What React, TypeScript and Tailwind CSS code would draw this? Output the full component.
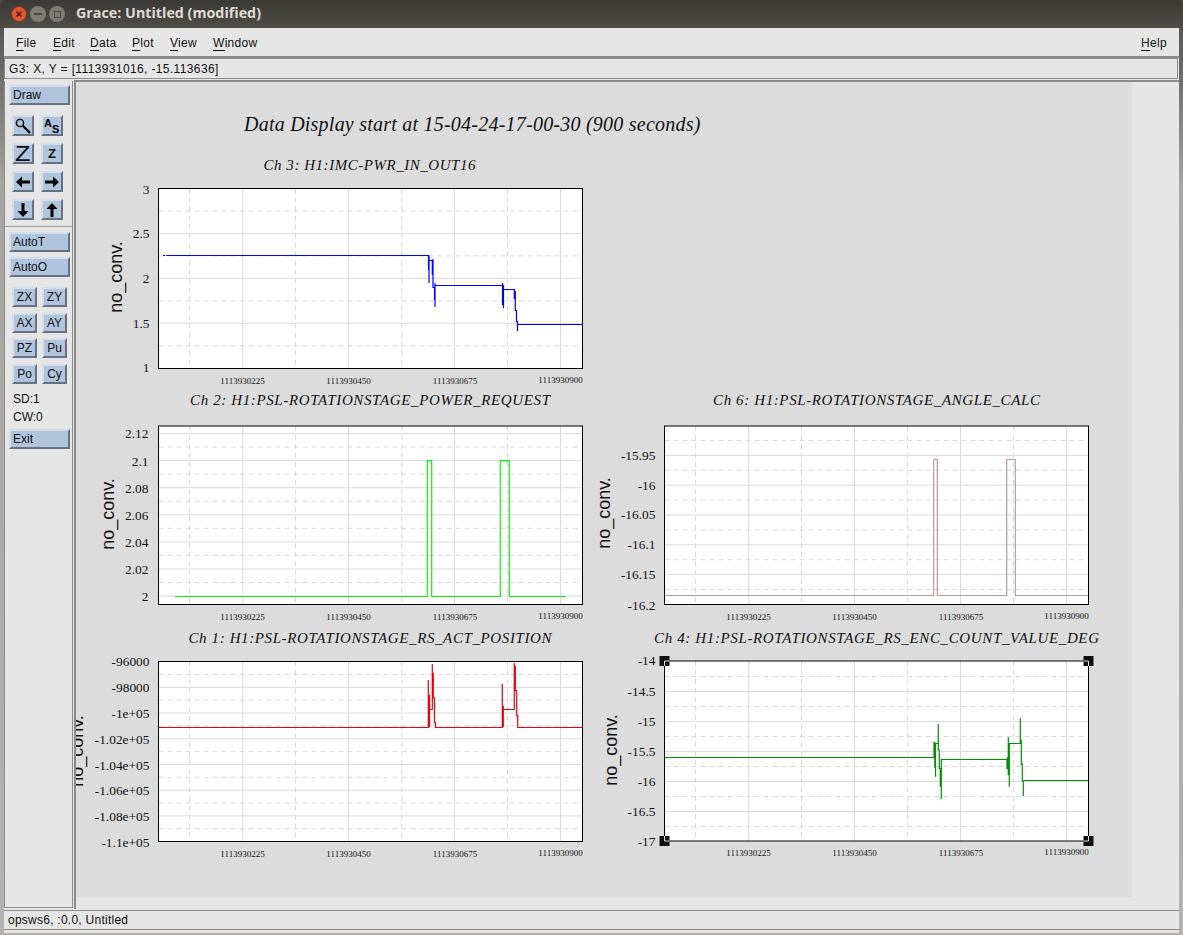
import type { ReactNode } from "react"

const serif = { fontFamily: '"Liberation Serif", serif' }

const btn =
  "bg-[#b0c4de] border-2 border-t-[#d3deec] border-l-[#d3deec] border-r-[#667284] border-b-[#667284] text-[12px] leading-none text-[#111] flex items-center"

function WideBtn({ label }: { label: string }) {
  return <div className={btn + " mx-[4px] w-[61px] h-[20px] pl-[2px]"}>{label}</div>
}

function TextBtn({ label }: { label: string }) {
  return <div className={btn + " w-[25px] h-[20px] justify-center"}>{label}</div>
}

function IconBtn({ children }: { children: ReactNode }) {
  return <div className={btn + " w-[22px] h-[21px] justify-center"}>{children}</div>
}

function Arrow({ rotate }: { rotate: number }) {
  return (
    <svg width="16" height="16" viewBox="0 0 16 16" style={{ transform: "rotate(" + rotate + "deg)" }}>
      <path d="M1 8L7 2.5V6.5H15V9.5H7V13.5Z" fill="#000" />
    </svg>
  )
}

function Sidebar() {
  return (
    <div className="w-[69px] shrink-0 border-r border-b border-l border-[#8c8c8c] flex flex-col pt-[4px] h-[827px]">
      <WideBtn label="Draw" />
      <div className="grid grid-cols-[22px_22px] gap-x-[7px] gap-y-[7px] pl-[7px] mt-[10px]">
        <IconBtn>
          <svg width="18" height="18" viewBox="0 0 18 18">
            <circle cx="6" cy="6" r="3.6" fill="none" stroke="#000" strokeWidth="1.4" />
            <path d="M8.8 8.8L16 16" stroke="#000" strokeWidth="2.2" />
          </svg>
        </IconBtn>
        <IconBtn>
          <svg width="18" height="18" viewBox="0 0 18 18" fontFamily="Liberation Sans, sans-serif" fontWeight="700">
            <text x="1" y="10" fontSize="11">A</text>
            <text x="9" y="16" fontSize="11">S</text>
          </svg>
        </IconBtn>
        <IconBtn><span className="text-[22px] leading-none scale-x-[1.15]">Z</span></IconBtn>
        <IconBtn><span className="text-[13px] font-bold leading-none">Z</span></IconBtn>
        <IconBtn><Arrow rotate={0} /></IconBtn>
        <IconBtn><Arrow rotate={180} /></IconBtn>
        <IconBtn><Arrow rotate={270} /></IconBtn>
        <IconBtn><Arrow rotate={90} /></IconBtn>
      </div>
      <div className="border-t border-[#9a9a9a] mt-[6px] mb-[5px]" />
      <WideBtn label="AutoT" />
      <div className="h-[5px]" />
      <WideBtn label="AutoO" />
      <div className="grid grid-cols-[25px_25px] gap-x-[5px] gap-y-[5.7px] pl-[7px] mt-[10px]">
        {["ZX", "ZY", "AX", "AY", "PZ", "Pu", "Po", "Cy"].map((t) => (
          <TextBtn key={t} label={t} />
        ))}
      </div>
      <div className="pl-[8px] text-[12px] leading-[18px] text-[#111] mt-[6px] mb-[3px]">
        <div>SD:1</div>
        <div>CW:0</div>
      </div>
      <WideBtn label="Exit" />
    </div>
  )
}

type Tick = { label: string; y: number }

type GraphProps = {
  left: number
  top: number
  height: number
  plotTop: number
  plotBottom: number
  title: string
  titleX: number
  titleW: number
  titleY: number
  ticks: Tick[]
  firstLine: number
  step: number
  lines: number
  labelRight: number
  axisX: number
  axisY: number
  d: string
  color: string
  solidFirst?: boolean
  selected?: boolean
}

function Graph(g: GraphProps) {
  const x0 = g.left + 82.5
  const x1 = x0 + 424
  const dashedX = [31, 137, 243.2, 349]
  const solidX = [84.3, 190, 296, 402]
  const tickX = [84, 190, 296.5, 402]
  const rows = Array.from({ length: g.lines }, (_, i) => g.firstLine + i * g.step)
  return (
    <svg width="506" height={g.height} viewBox={g.left + " " + g.top + " 506 " + g.height} className="block overflow-visible">
      <rect x={x0} y={g.plotTop} width="424" height={g.plotBottom - g.plotTop} fill="#fff" />
      {rows.map((y, i) => (
        <line
          key={i}
          x1={x0}
          x2={x1}
          y1={y}
          y2={y}
          stroke="#d9d9d9"
          strokeWidth="1"
          strokeDasharray={(i % 2 === 0) !== !!g.solidFirst ? "5 4" : undefined}
        />
      ))}
      {dashedX.map((x) => (
        <line key={x} x1={x0 + x} x2={x0 + x} y1={g.plotTop} y2={g.plotBottom} stroke="#d9d9d9" strokeDasharray="5 4" />
      ))}
      {solidX.map((x) => (
        <line key={x} x1={x0 + x} x2={x0 + x} y1={g.plotTop} y2={g.plotBottom} stroke="#d9d9d9" />
      ))}
      <path d={g.d} fill="none" stroke={g.color} strokeWidth="1.2" />
      <rect x={x0} y={g.plotTop} width="424" height={g.plotBottom - g.plotTop} fill="none" stroke="#000" strokeWidth="1" />
      <text
        x={g.titleX}
        y={g.titleY}
        textLength={g.titleW}
        lengthAdjust="spacing"
        fontSize="15"
        fontStyle="italic"
        fill="#111"
        style={serif}
      >
        {g.title}
      </text>
      {g.ticks.map((t) => (
        <text key={t.label} x={g.labelRight} y={t.y + 4.5} textAnchor="end" fontSize="13.4" fill="#111" style={serif}>
          {t.label}
        </text>
      ))}
      {tickX.map((x, i) => (
        <text
          key={x}
          x={x0 + x}
          y={g.plotBottom + (i === 3 ? 14 : 15)}
          textAnchor="middle"
          fontSize="9"
          fill="#111"
          style={serif}
        >
          {["1113930225", "1113930450", "1113930675", "1113930900"][i]}
        </text>
      ))}
      <text
        transform={"translate(" + g.axisX + " " + g.axisY + ") rotate(-90)"}
        textAnchor="middle"
        fontSize="18"
        fill="#111"
        fontFamily="Liberation Sans, sans-serif"
      >
        no_conv.
      </text>
      {g.selected &&
        [
          [x0, g.plotTop, 1, 1],
          [x1, g.plotTop, -1, 1],
          [x0, g.plotBottom, 1, -1],
          [x1, g.plotBottom, -1, -1],
        ].map(([cx, cy, dx, dy]) => (
          <g key={cx + "-" + cy}>
            <rect x={cx - 5} y={cy - 5} width="10" height="10" fill="#111" />
            <path d={"M" + cx + " " + (cy + dy * 5) + "V" + cy + "H" + (cx + dx * 5)} fill="none" stroke="#ddd" strokeWidth="1" />
          </g>
        ))}
    </svg>
  )
}

const ch3: GraphProps = {
  left: 76, top: 152, height: 236, plotTop: 188.5, plotBottom: 368.5,
  title: "Ch 3: H1:IMC-PWR_IN_OUT16", titleX: 263.5, titleW: 212, titleY: 170,
  ticks: [
    { label: "3", y: 189 }, { label: "2.5", y: 233 }, { label: "2", y: 278 }, { label: "1.5", y: 323 }, { label: "1", y: 367 },
  ],
  firstLine: 211, step: 22.45, lines: 7, labelRight: 149.5, axisX: 122, axisY: 277,
  d: "M163 255.5H165.2M166.2 255.5H428.5V270M429 255.5V283M429.5 260.5H432.3V275M433 259V287.5H434.5V300M435 283V307M435 285.5H502.7M502.5 283V305M503.5 285V308M503.5 289.5H514.3V299M515.3 291V310.5H516.5V321.5H517.5V331M517.5 324.5H582",
  color: "#0000ff",
}

const ch2: GraphProps = {
  left: 76, top: 388, height: 240, plotTop: 426, plotBottom: 604.5,
  title: "Ch 2: H1:PSL-ROTATIONSTAGE_POWER_REQUEST", titleX: 190, titleW: 360, titleY: 405,
  ticks: [
    { label: "2.12", y: 433 }, { label: "2.1", y: 461 }, { label: "2.08", y: 488 }, { label: "2.06", y: 515 },
    { label: "2.04", y: 542 }, { label: "2.02", y: 569 }, { label: "2", y: 596 },
  ],
  firstLine: 433.5, step: 13.55, lines: 13, labelRight: 148.5, axisX: 114, axisY: 514,
  d: "M175 596.5H427.3V460.7H431.7V596.5H500.3V460.7H509.3V596.5H566",
  color: "#11ee11",
  solidFirst: true,
}

const ch6: GraphProps = {
  left: 582, top: 388, height: 240, plotTop: 426, plotBottom: 604.5,
  title: "Ch 6: H1:PSL-ROTATIONSTAGE_ANGLE_CALC", titleX: 713, titleW: 327, titleY: 405,
  ticks: [
    { label: "-15.95", y: 455 }, { label: "-16", y: 485 }, { label: "-16.05", y: 514 }, { label: "-16.1", y: 544 },
    { label: "-16.15", y: 574 }, { label: "-16.2", y: 605 },
  ],
  firstLine: 440.5, step: 14.9, lines: 11, labelRight: 655.5, axisX: 610, axisY: 513,
  d: "M664.5 595.5H933.7V459.5H937.3V595.5H1006.7V459.5H1015.3V595.5H1088",
  color: "#bb9999",
}

const ch1: GraphProps = {
  left: 76, top: 628, height: 240, plotTop: 661.5, plotBottom: 841.5,
  title: "Ch 1: H1:PSL-ROTATIONSTAGE_RS_ACT_POSITION", titleX: 188.5, titleW: 363, titleY: 643,
  ticks: [
    { label: "-96000", y: 661 }, { label: "-98000", y: 687 }, { label: "-1e+05", y: 713 }, { label: "-1.02e+05", y: 739 },
    { label: "-1.04e+05", y: 765 }, { label: "-1.06e+05", y: 790 }, { label: "-1.08e+05", y: 816 }, { label: "-1.1e+05", y: 842 },
  ],
  firstLine: 674.5, step: 12.85, lines: 13, labelRight: 149.5, axisX: 83, axisY: 751,
  d: "M158.5 727.5H428.3V680M429.5 727V695M429.5 709.5H432.3V664M433.3 673V698H434.5V722.5H435.5V727.5H502.3V684M503.3 727V706V709.5H514.3V663M515.3 666V690.7H516.7V715.7H517.7V727.5H582",
  color: "#e8000c",
}

const ch4: GraphProps = {
  left: 582, top: 628, height: 240, plotTop: 661, plotBottom: 841,
  title: "Ch 4: H1:PSL-ROTATIONSTAGE_RS_ENC_COUNT_VALUE_DEG", titleX: 654, titleW: 445, titleY: 643,
  ticks: [
    { label: "-14", y: 660 }, { label: "-14.5", y: 691 }, { label: "-15", y: 721 }, { label: "-15.5", y: 751 },
    { label: "-16", y: 781 }, { label: "-16.5", y: 811 }, { label: "-17", y: 841 },
  ],
  firstLine: 676.5, step: 15, lines: 11, labelRight: 655.5, axisX: 617, axisY: 750,
  d: "M664.5 757.5H934V742M934.8 767.7V742M935.5 776.7V743.5H938.3V724V750H939.3V768.3H940.3V786.7M941.3 799.3V759.5H1007V769.3M1007.6 757.3V769.3M1008.3 737.3V775.3M1009.3 743.3V786.7M1009.3 743.5H1020.3V718.3V743.5M1021.3 740V764.3H1022.3V781H1023.3V796M1023.3 780.5H1088",
  color: "#008f00",
  selected: true,
}

function MenuItem({ first, rest, className }: { first: string; rest: string; className: string }) {
  return (
    <span className={className}>
      <span className="underline underline-offset-[3px]">{first}</span>
      {rest}
    </span>
  )
}

export default function App() {
  return (
    <div
      className="w-[1183px] h-[935px] overflow-hidden flex flex-col bg-linear-to-b from-[#4b4944] via-[#a8a6a0] via-20% to-[#b4b2ac]"
      style={{ fontFamily: '"Liberation Sans", sans-serif' }}
    >
      {/* title bar */}
      <div className="h-[28px] shrink-0 rounded-t-[6px] bg-linear-to-b from-[#3a3935] to-[#4f4d47] flex items-center pl-[11px]">
        <div className="w-[16px] h-[16px] rounded-full bg-[#e9552a] border border-[#7a3a20] flex items-center justify-center">
          <svg width="8" height="8" viewBox="0 0 8 8">
            <path d="M1.5 1.5L6.5 6.5M6.5 1.5L1.5 6.5" stroke="#4a1c0c" strokeWidth="1.6" />
          </svg>
        </div>
        <div className="w-[16px] h-[16px] rounded-full bg-[#7d7b74] ml-[3px] flex items-center justify-center">
          <div className="w-[8px] h-[2px] bg-[#4a4843]" />
        </div>
        <div className="w-[16px] h-[16px] rounded-full bg-[#7d7b74] ml-[3px] flex items-center justify-center">
          <div className="w-[7px] h-[7px] border border-[#4a4843]" />
        </div>
        <span className="ml-[11px] text-[14.3px] font-bold text-[#dfdbd2] pb-[2px]" style={{ fontFamily: '"Open Sans", sans-serif' }}>
          Grace: Untitled (modified)
        </span>
      </div>

      <div className="mx-[4px] mb-[2px] flex-1 bg-[#e6e6e6] flex flex-col text-[#111]">
        {/* menu bar */}
        <div className="h-[30px] shrink-0 border-b-2 border-[#8c8c8c] flex items-center text-[12px] tracking-[0.3px] pl-[12px] pt-[2px]">
          <MenuItem first="F" rest="ile" className="w-[37px]" />
          <MenuItem first="E" rest="dit" className="w-[37px]" />
          <MenuItem first="D" rest="ata" className="w-[42px]" />
          <MenuItem first="P" rest="lot" className="w-[38px]" />
          <MenuItem first="V" rest="iew" className="w-[43px]" />
          <MenuItem first="W" rest="indow" className="" />
          <MenuItem first="H" rest="elp" className="ml-auto mr-[12px]" />
        </div>

        {/* locator */}
        <div className="h-[21px] shrink-0 border border-[#8c8c8c] mr-[1px] flex items-center pl-[4px] text-[12px] tracking-[0.37px]">
          G3: X, Y = [1113931016, -15.113636]
        </div>

        <div className="flex mt-[2px]">
          <Sidebar />
          {/* drawing area */}
          <div className="ml-[1px] border-l-2 border-t-2 border-[#8c8c8c] w-[1105px] h-[829px] -mt-[1px]">
            <div className="w-[1056px] h-[815px] bg-[#dcdcdc] overflow-hidden">
              <div className="h-[70px] flex items-center pl-[168px] pt-[14px]">
                <span className="text-[20px] italic text-[#111] tracking-[0.23px]" style={serif}>
                  Data Display start at 15-04-24-17-00-30 (900 seconds)
                </span>
              </div>
              <div className="grid grid-cols-[506px_506px]">
                <Graph {...ch3} />
                <div />
                <Graph {...ch2} />
                <Graph {...ch6} />
                <Graph {...ch1} />
                <Graph {...ch4} />
              </div>
            </div>
          </div>
        </div>

        {/* status */}
        <div className="h-[20px] shrink-0 border-y border-[#8c8c8c] mt-[1px] flex items-center pl-[4px] text-[12px] tracking-[0.25px]">
          opsws6, :0.0, Untitled
        </div>
      </div>
    </div>
  )
}
